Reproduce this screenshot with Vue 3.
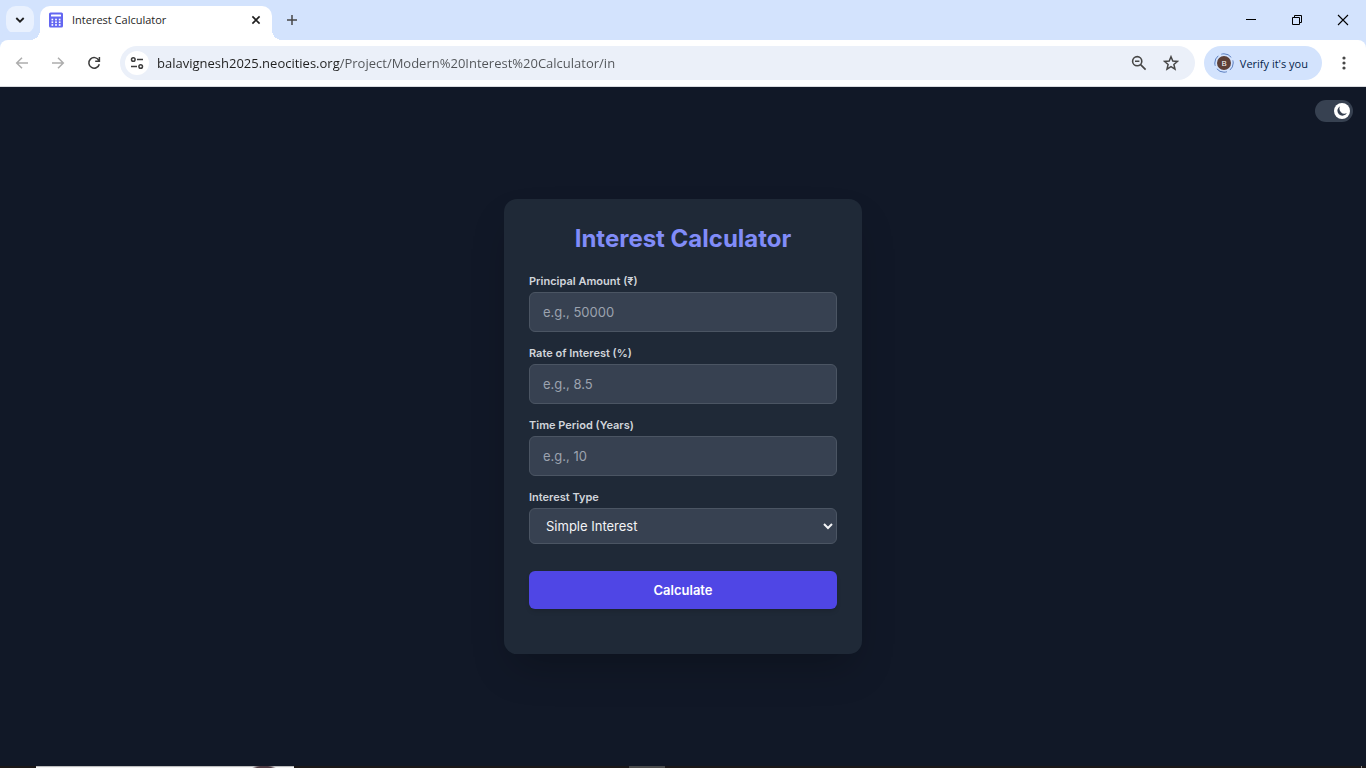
<script setup>
import { ref } from 'vue'

const dark = ref(true)
const address = ref('balavignesh2025.neocities.org/Project/Modern%20Interest%20Calculator/in')
const interestType = ref('simple')
const fields = [
  { id: 'principal', label: 'Principal Amount (₹)', hint: 'e.g., 50000' },
  { id: 'rate', label: 'Rate of Interest (%)', hint: 'e.g., 8.5' },
  { id: 'years', label: 'Time Period (Years)', hint: 'e.g., 10' }
]
</script>

<template>
  <div class="window">
    <header class="tabstrip">
      <button class="tab-search" aria-label="Search tabs">
        <svg width="10" height="10" viewBox="0 0 10 10"><path d="M1.3 3 5 6.7 8.7 3" fill="none" stroke="#1f1f1f" stroke-width="1.8" /></svg>
      </button>
      <div class="tab">
        <svg class="favicon" width="16" height="16" viewBox="0 0 16 16">
          <rect x="1" y="0.500" width="14" height="15" rx="1.500" fill="#6366f1" />
          <g fill="#fff">
            <rect x="3" y="2.500" width="10" height="2" rx=".5" />
            <rect x="3.500" y="6.700" width="1.700" height="1.700" /><rect x="7.150" y="6.700" width="1.700" height="1.700" /><rect x="10.800" y="6.700" width="1.700" height="1.700" />
            <rect x="3.500" y="9.400" width="1.700" height="1.700" /><rect x="7.150" y="9.400" width="1.700" height="1.700" /><rect x="10.800" y="9.400" width="1.700" height="1.700" />
            <rect x="3.500" y="12.100" width="1.700" height="1.700" /><rect x="7.150" y="12.100" width="1.700" height="1.700" /><rect x="10.800" y="12.100" width="1.700" height="1.700" />
          </g>
        </svg>
        <span class="tab-title">Interest Calculator</span>
        <button class="bare tab-close" aria-label="Close tab">
          <svg width="10" height="10" viewBox="0 0 10 10"><path d="M1.4 1.4 8.6 8.6M8.6 1.4 1.4 8.6" stroke="#1f1f1f" stroke-width="1.6" /></svg>
        </button>
      </div>
      <button class="bare new-tab" aria-label="New tab">
        <svg width="12" height="12" viewBox="0 0 12 12"><path d="M6 1v10M1 6h10" stroke="#474747" stroke-width="1.5" /></svg>
      </button>
      <div class="window-controls">
        <button class="bare" aria-label="Minimize">
          <svg width="12" height="12" viewBox="0 0 12 12"><path d="M1 5.5h10" stroke="#000" /></svg>
        </button>
        <button class="bare" aria-label="Restore">
          <svg width="12" height="12" viewBox="0 0 12 12"><path d="M1.500 3.500h7v7h-7zM3.500 3.500v-2h7v7h-2" fill="none" stroke="#000" /></svg>
        </button>
        <button class="bare" aria-label="Close">
          <svg width="12" height="12" viewBox="0 0 12 12"><path d="M1 1l10 10M11 1 1 11" stroke="#000" stroke-width="1.1" /></svg>
        </button>
      </div>
    </header>

    <nav class="toolbar">
      <button class="bare nav-button" aria-label="Back">
        <svg width="14" height="14" viewBox="0 0 14 14"><path d="M13 7H2M7 1.700 1.700 7 7 12.300" fill="none" stroke="#adadad" stroke-width="1.500" /></svg>
      </button>
      <button class="bare nav-button" aria-label="Forward">
        <svg width="14" height="14" viewBox="0 0 14 14"><path d="M1 7h11M7 1.700 12.300 7 7 12.300" fill="none" stroke="#adadad" stroke-width="1.500" /></svg>
      </button>
      <button class="bare nav-button" aria-label="Reload">
        <svg width="14" height="14" viewBox="0 0 14 14"><path d="M11.800 4.300A5.300 5.300 0 1 0 12.300 8.200M12.400 1v4.200H8.200" fill="none" stroke="#3c3c3c" stroke-width="1.500" /></svg>
      </button>
      <div class="omnibox">
        <button class="site-info" aria-label="View site information">
          <svg width="14" height="14" viewBox="0 0 14 14" fill="none" stroke="#3c3c3c" stroke-width="1.500"><circle cx="3.300" cy="3.500" r="1.800" /><path d="M7 3.500h6M1 10.500h6" /><circle cx="10.700" cy="10.500" r="1.800" /></svg>
        </button>
        <input v-model="address" class="address" type="text" aria-label="Address and search bar" spellcheck="false" />
        <button class="bare omni-action" aria-label="Zoom">
          <svg width="16" height="16" viewBox="0 0 16 16" fill="none" stroke="#474747" stroke-width="1.600"><circle cx="6.200" cy="6.200" r="4.600" /><path d="M9.600 9.600 14.600 14.600M4 6.200h4.400" /></svg>
        </button>
        <button class="bare omni-action" aria-label="Bookmark this tab">
          <svg width="16" height="16" viewBox="0 0 16 16"><path d="M8 1.700 9.800 6l4.700.4-3.600 3.100 1.100 4.600L8 11.700 4 14.100l1.100-4.600L1.500 6.400 6.200 6z" fill="none" stroke="#474747" stroke-width="1.500" /></svg>
        </button>
      </div>
      <button class="profile">
        <svg width="20" height="20" viewBox="0 0 20 20"><circle cx="10" cy="10" r="9.200" fill="none" stroke="#5b7fc0" stroke-dasharray="11 3.450" stroke-dashoffset="3" /><circle cx="10" cy="10" r="7" fill="#5d4037" /><text x="10" y="12.800" text-anchor="middle" class="initial">B</text></svg>
        <span>Verify it's you</span>
      </button>
      <button class="bare menu" aria-label="Menu">
        <svg width="4" height="16" viewBox="0 0 4 16" fill="#474747"><circle cx="2" cy="3" r="1.600" /><circle cx="2" cy="8" r="1.600" /><circle cx="2" cy="13" r="1.600" /></svg>
      </button>
    </nav>

    <main class="page">
      <label class="theme-toggle">
        <input v-model="dark" type="checkbox" aria-label="Dark mode" />
        <span class="thumb">
          <svg width="12" height="12" viewBox="0 0 12 12"><path d="M4.200 1.200A5 5 0 1 0 10.900 7.900 4.900 4.900 0 0 1 4.200 1.200z" fill="#374151" /></svg>
        </span>
      </label>
      <form class="card" @submit.prevent>
        <h1>Interest Calculator</h1>
        <div v-for="f in fields" :key="f.id" class="field">
          <label :for="f.id">{{ f.label }}</label>
          <input :id="f.id" type="text" inputmode="decimal" :placeholder="f.hint" />
        </div>
        <div class="field">
          <label for="type">Interest Type</label>
          <select id="type" v-model="interestType">
            <option value="simple">Simple Interest</option>
            <option value="compound">Compound Interest</option>
          </select>
        </div>
        <button class="calculate" type="submit">Calculate</button>
      </form>
    </main>

    <footer class="taskbar">
      <div class="search-edge"></div>
      <div class="app-edge"></div>
      <div class="desktop-edge"></div>
    </footer>
  </div>
</template>

<style>
body {
  margin: 0;
}
</style>

<style scoped>
.window {
  display: flex;
  flex-direction: column;
  height: 100vh;
  overflow: hidden;
  font-family: "Open Sans", "Noto Sans", sans-serif;
  background: #111827;
}

button,
input,
select {
  box-sizing: border-box;
  margin: 0;
  font-family: inherit;
}

button {
  display: flex;
  align-items: center;
  justify-content: center;
  border: 0;
  padding: 0;
}

svg {
  display: block;
  flex: none;
}

.bare {
  background: none;
}

.tabstrip {
  display: flex;
  align-items: center;
  flex: none;
  height: 40px;
  padding-left: 6px;
  background: #d3e3fd;
}

.tab-search {
  width: 28px;
  height: 28px;
  border-radius: 10px;
  background: #e9f1fe;
}

.tab {
  position: relative;
  display: flex;
  align-items: center;
  align-self: flex-end;
  box-sizing: border-box;
  width: 232px;
  height: 34px;
  margin-left: 6px;
  padding: 0 10px 6px 8px;
  border-radius: 10px 10px 0 0;
  background: #fff;
}

.tab::before,
.tab::after {
  content: "";
  position: absolute;
  bottom: 0;
  width: 10px;
  height: 10px;
}

.tab::before {
  right: 100%;
  background: radial-gradient(circle at 0 0, transparent 10px, #fff 10px);
}

.tab::after {
  left: 100%;
  background: radial-gradient(circle at 100% 0, transparent 10px, #fff 10px);
}

.tab-title {
  flex: 1;
  margin-left: 8px;
  font-size: 11px;
  line-height: 16px;
  color: #1f1f1f;
}

.tab-close {
  width: 12px;
  height: 16px;
}

.new-tab {
  width: 28px;
  height: 28px;
  margin-left: 6px;
}

.window-controls {
  display: flex;
  margin-left: auto;
}

.window-controls button {
  width: 46px;
  height: 40px;
}

.toolbar {
  display: flex;
  align-items: center;
  flex: none;
  box-sizing: border-box;
  height: 47px;
  padding: 0 12px 0 4px;
  border-bottom: 1px solid #d9dbdf;
  border-radius: 8px 8px 0 0;
  background: #fff;
  box-shadow: 0 -8px 0 #d3e3fd;
}

.tab {
  z-index: 1;
}

.nav-button {
  width: 36px;
  height: 34px;
}

.omnibox {
  display: flex;
  align-items: center;
  flex: 1;
  height: 34px;
  margin: 0 9px 0 8px;
  padding: 0 8px 0 5px;
  border-radius: 17px;
  background: #ebf0f9;
}

.site-info {
  width: 24px;
  height: 24px;
  border-radius: 12px;
  background: #fff;
}

.address {
  flex: 1;
  height: 24px;
  padding: 0;
  margin-left: 8px;
  border: 0;
  outline: 0;
  font-size: 13px;
  color: #1f1f1f;
  background: linear-gradient(90deg, #1f1f1f 183px, #505357 183px);
  -webkit-background-clip: text;
  background-clip: text;
  -webkit-text-fill-color: transparent;
}

.omni-action {
  width: 32px;
  height: 28px;
}

.profile {
  gap: 6px;
  height: 34px;
  padding: 0 14px 0 10px;
  border-radius: 17px;
  font-size: 11px;
  color: #041e49;
  background: #d3e3fd;
}

.initial {
  font-size: 8px;
  fill: #fff;
}

.menu {
  width: 20px;
  height: 28px;
  margin-left: 12px;
}

.page {
  position: relative;
  display: flex;
  align-items: center;
  justify-content: center;
  flex: 1;
  font-family: Inter, sans-serif;
}

.theme-toggle {
  position: absolute;
  top: 13px;
  right: 13px;
  display: flex;
  align-items: center;
  justify-content: flex-end;
  box-sizing: border-box;
  width: 38px;
  height: 22px;
  padding: 3px;
  border-radius: 11px;
  background: #374151;
}

.theme-toggle input {
  position: absolute;
  inset: 0;
  width: 100%;
  height: 100%;
  opacity: 0;
}

.thumb {
  display: flex;
  align-items: center;
  justify-content: center;
  width: 16px;
  height: 16px;
  border-radius: 8px;
  background: #fff;
}

.card {
  box-sizing: border-box;
  width: 100%;
  max-width: 358px;
  padding: 25px 25px 45px;
  border-radius: 13px;
  background: #1f2937;
  box-shadow: 0 20px 40px -10px rgba(0, 0, 0, 0.25);
}

h1 {
  margin: 0 0 20px;
  font-size: 24px;
  line-height: 29px;
  font-weight: 700;
  text-align: center;
  color: #818cf8;
}

.field {
  display: flex;
  flex-direction: column;
  gap: 3px;
  margin-bottom: 13px;
}

.field label {
  font-size: 11px;
  line-height: 16px;
  font-weight: 600;
  color: #d1d5db;
}

.field input,
.field select {
  width: 100%;
  height: 40px;
  padding: 0 13px;
  border: 1px solid #4b5563;
  border-radius: 6px;
  font-size: 13px;
  color: #f3f4f6;
  background-color: #374151;
}

.field select {
  height: 36px;
  padding: 0 0 0 12px;
}

.field input::placeholder {
  color: #9ca3af;
}

.calculate {
  width: 100%;
  height: 38px;
  margin-top: 27px;
  border-radius: 6px;
  font-size: 13px;
  font-weight: 600;
  color: #fff;
  background: #4f46e5;
  box-shadow: 0 3px 5px -1px rgba(0, 0, 0, 0.15);
}

.taskbar {
  display: flex;
  flex: none;
  height: 2px;
  padding-left: 36px;
  background: #1c1818;
}

.search-edge {
  width: 258px;
  background: radial-gradient(ellipse 12px 3px at 228px 2px, #4d3940 60%, transparent), linear-gradient(#bdbdbd 1px, #f5f5f5 1px);
}

.app-edge {
  width: 36px;
  margin-left: 335px;
  background: #4a4a4a;
}

.desktop-edge {
  width: 1px;
  margin: 0 4px 0 auto;
  background: #8a8a8a;
}
</style>
